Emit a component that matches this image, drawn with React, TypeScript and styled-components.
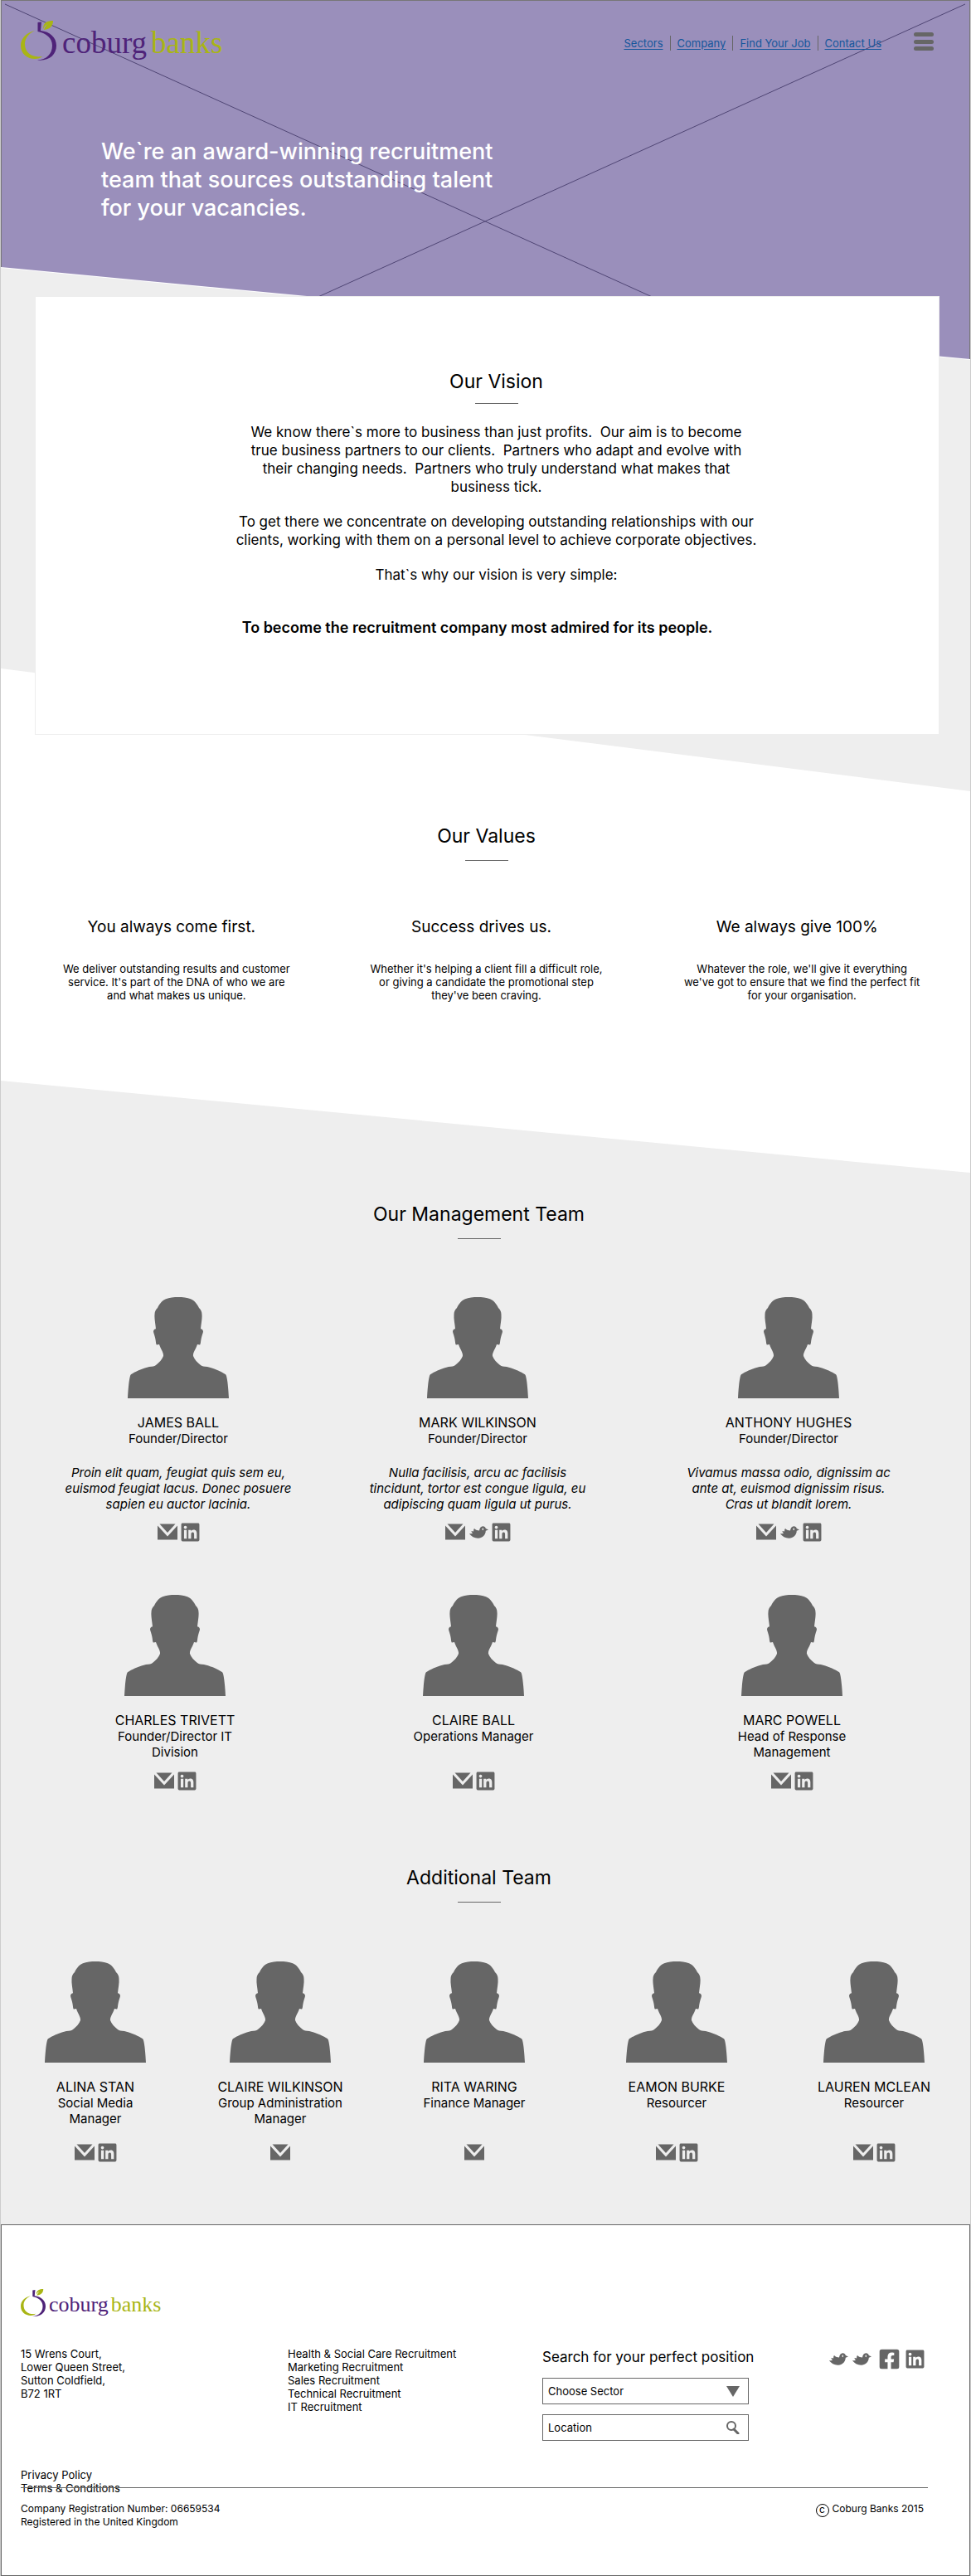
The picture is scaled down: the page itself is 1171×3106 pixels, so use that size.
import React from "react";
import styled, { createGlobalStyle } from "styled-components";
import { FaFacebookSquare, FaLinkedin } from "react-icons/fa";

const ink = "#000";
const grey = "#666";
const pale = "#eee";
const purple = "#4f2379";
const lime = "#a9b515";

const GlobalStyle = createGlobalStyle`
  *, *::before, *::after { box-sizing: border-box; }
  body {
    margin: 0;
    background: #fff;
    color: ${ink};
    font-family: Inter, "Open Sans", sans-serif;
  }
  h1, h2, h3, p, ul, address { margin: 0; padding: 0; font-weight: 400; font-style: normal; }
  ul { list-style: none; }
  a { color: inherit; text-decoration: none; }
`;

const Page = styled.div`
  border-left: 1px solid #ccc;
  border-right: 1px solid #ccc;
`;

/* ---------- shared pieces ---------- */

const Title = styled.h2`
  font-size: 23px;
  line-height: 30px;
  text-align: center;
`;

const Rule = styled.div<{ $gap: number }>`
  width: 52px;
  height: 1px;
  margin: ${(p) => p.$gap}px auto 0;
  background: ${grey};
`;

const LogoRow = styled.a<{ $small?: boolean }>`
  display: flex;
  align-items: flex-start;
  font-family: "Liberation Serif", serif;
  font-size: ${(p) => (p.$small ? 26 : 37)}px;
  line-height: ${(p) => (p.$small ? 38 : 54)}px;
  height: ${(p) => (p.$small ? 34 : 49)}px;
  color: ${purple};

  svg {
    flex: none;
    width: ${(p) => (p.$small ? 30 : 43)}px;
    height: 100%;
    margin-right: ${(p) => (p.$small ? 4 : 7)}px;
  }
`;

const LogoTail = styled.span<{ $small?: boolean }>`
  margin-left: ${(p) => (p.$small ? 3 : 5)}px;
  color: ${lime};
`;

function Logo({ small }: { small?: boolean }) {
  return (
    <LogoRow href="#" $small={small}>
      <svg viewBox="0 0 43 49" preserveAspectRatio="none" aria-hidden="true">
        <path d="M17 12 C7 14 0 21 0 30 C0 40 8 46 17 46 C21 46 24 45 26 43 C14 45 5 39 5 28 C5 21 10 15 17 12Z" fill={lime} />
        <path d="M20.500 2 L25 1.500 L24 12 C35 13 43 20 43 30 C43 41 34 49 20 47.500 C31 47 38 40 38 30 C38 21 31 15 20.500 13Z" fill={purple} />
        <path d="M27 8 C28 2 32 0 39 0 C39 6 36 10 28 11 C29 8 31 5 33 4 C30 5 28 7 27 10Z" fill={lime} />
      </svg>
      <span>coburg</span>
      <LogoTail $small={small}>banks</LogoTail>
    </LogoRow>
  );
}

const Icon = styled.svg`
  display: block;
  fill: ${grey};
`;

const MailIcon = () => (
  <Icon width="24" height="20" viewBox="0 0 24 20" aria-hidden="true">
    <path d="M2.500 .5h19L12 11z" />
    <path d="M0 2.500L12 15.500 24 2.500V19.500H0z" />
  </Icon>
);

const BirdIcon = () => (
  <Icon width="23" height="15" viewBox="0 0 23 15" aria-hidden="true">
    <path d="M0 9C1.800 9.400 3.200 9.300 4.300 8.800 3 8 2.500 7 2.500 6 3.500 6.400 4.500 6.500 5.300 6.300 5 5 5.200 4 6 3 8 4.800 9.800 5.400 12 5.600 12.300 2.500 14 .3 16.300 .3 18.100 .3 19.300 1.300 19.800 3L23 4.500 19.800 5.700C19.500 11 15.500 14.700 10.500 14.700 6.500 14.700 2 12.500 0 9Z" />
    <ellipse cx="16.300" cy="3.800" rx=".8" ry="1.400" fill={pale} />
  </Icon>
);

const IconLink = styled.a`
  display: flex;
  align-items: center;
  color: ${grey};
`;

const SquareMark = styled.span<{ $wide?: boolean }>`
  display: flex;
  justify-content: center;
  width: ${(p) => (p.$wide ? 24 : 22)}px;

  svg { flex: none; }
`;

type Channel = "Email" | "Twitter" | "Facebook" | "LinkedIn";

function Contact({ channel }: { channel: Channel }) {
  return (
    <IconLink href="#" aria-label={channel}>
      {channel === "Email" && <MailIcon />}
      {channel === "Twitter" && <BirdIcon />}
      {channel === "Facebook" && <SquareMark $wide><FaFacebookSquare size={27} /></SquareMark>}
      {channel === "LinkedIn" && <SquareMark><FaLinkedin size={25} /></SquareMark>}
    </IconLink>
  );
}

/* ---------- intro: header, tagline, vision ---------- */

const Intro = styled.div`
  position: relative;
  padding-bottom: 68px;
  background: ${pale};
`;

const Backdrop = styled.div`
  position: absolute;
  inset: 0 0 auto;
  height: 434px;
  background: #fff;
  clip-path: polygon(0 0, 100% 0, 100% 100%, 0 323px);
`;

const BackdropFill = styled.div`
  height: 433px;
  border: 1px solid #777;
  border-bottom: 0;
  background: #9a8fbb;
  clip-path: polygon(0 0, 100% 0, 100% 100%, 0 322px);

  svg { display: block; width: 100%; height: 100%; }
`;

const Header = styled.header`
  position: relative;
  display: flex;
  justify-content: space-between;
  align-items: flex-start;
  padding: 25px 44px 0 24px;
`;

const HeaderRight = styled.div`
  display: flex;
  align-items: flex-start;
  gap: 39px;
  padding-top: 14px;
`;

const Nav = styled.nav`
  display: flex;
  padding-top: 4px;
`;

const NavLink = styled.a`
  padding: 0 8px;
  border-left: 1px solid ${grey};
  font-size: 13px;
  line-height: 18px;
  color: #14569c;
  text-decoration: underline;
  text-underline-offset: 2px;

  &:first-child { border-left: 0; }
  &:last-child { padding-right: 0; }
`;

const MenuButton = styled.button`
  display: flex;
  flex-direction: column;
  justify-content: space-between;
  width: 24px;
  height: 22px;
  padding: 0;
  border: 0;
  background: none;

  span { height: 5px; border-radius: 3px; background: ${grey}; }
`;

const Tagline = styled.h1`
  position: relative;
  margin: 92px 0 89px 121px;
  color: #fff;
  font-size: 27px;
  font-weight: 500;
  line-height: 34px;
`;

const Card = styled.section`
  position: relative;
  z-index: 1;
  margin: 0 37px 0 41px;
  padding: 87px 0 117px 22px;
  border: 1px solid ${pale};
  background: #fff;
`;

const Copy = styled.div`
  display: grid;
  gap: 20px;
  margin-top: 23px;
  font-size: 17px;
  line-height: 22px;
  text-align: center;
  white-space: pre-wrap;
`;

const Statement = styled.p`
  padding: 22px 46px 0 0;
  font-size: 18px;
  font-weight: 600;
`;

/* ---------- values ---------- */

const Values = styled.section`
  position: relative;
  margin-top: -148px;
  padding: 187px 8px 206px 24px;
  background: #fff;
  clip-path: polygon(0 0, 100% 148px, 100% 100%, 0 100%);
`;

const ValueGrid = styled.div`
  display: grid;
  grid-template-columns: 376fr 372fr 390fr;
  margin-top: 68px;
  text-align: center;
`;

const CentredHead = styled.div`
  padding-right: 14px;
`;

const ValueTitle = styled.h3`
  padding-right: 12px;
  font-size: 19px;
  line-height: 24px;
`;

const ValueText = styled.p`
  margin-top: 30px;
  font-size: 13px;
  line-height: 16px;
`;

/* ---------- people ---------- */

const Team = styled.section`
  position: relative;
  margin-top: -111px;
  padding: 146px 0 76px;
  background: ${pale};
  clip-path: polygon(0 0, 100% 111px, 100% 100%, 0 100%);
`;

const TeamHead = styled.div<{ $gap?: number }>`
  margin-top: ${(p) => p.$gap ?? 0}px;
  padding-right: 16px;
`;

const People = styled.ul<{ $columns: string; $gap: number; $inset: string }>`
  display: grid;
  grid-template-columns: ${(p) => p.$columns};
  margin-top: ${(p) => p.$gap}px;
  padding: ${(p) => p.$inset};
  text-align: center;
`;

const Person = styled.li`
  display: flex;
  flex-direction: column;
  align-items: center;
  font-size: 15px;
  line-height: 19px;
`;

const PersonName = styled.h3`
  margin-top: 20px;
  font-size: 16px;
`;

const Bio = styled.p`
  margin-top: 22px;
  font-style: italic;
`;

const Contacts = styled.div`
  display: flex;
  align-items: center;
  gap: 5px;
  height: 22px;
`;

const Spacer = styled.div<{ $size: number }>`
  flex: 1 0 ${(p) => p.$size}px;
`;

const Avatar = () => (
  <Icon width="122" height="122" viewBox="0 0 122 122" aria-hidden="true">
    <path d="M0 122 C.5 112 1.500 100 3 95 C3.500 93.500 4 93 6 92 C11 89 19 85.500 26 84 C30 83.500 32 83.500 34 82 C38 79 41.500 75 43 71 C43.500 67 40 63 38 57 L35 57.500 C34 57 34 53 33.300 50 C32.500 46 31.500 44 31 41.700 C31 39.500 32.500 38.500 34 38.300 C33.500 32 32 26 32.500 21 C32.500 18 33.500 15 36 13 C39 7 42 4 46 2.300 C50 .6 56 0 61 0 C66 0 72 .6 76 2.300 C80 4 83 7 86 13 C88.500 15 89.500 18 89.500 21 C90 26 88.500 32 88 38.300 C89.500 38.500 91 39.500 91 41.700 C90.500 44 89.500 46 88.700 50 C88 53 88 57 87 57.500 L84 57 C82 63 78.500 67 79 71 C80.500 75 84 79 88 82 C90 83.500 92 83.500 96 84 C103 85.500 111 89 116 92 C118 93 118.500 93.500 119 95 C120.500 100 121.500 112 122 122Z" />
  </Icon>
);

interface Member {
  name: string;
  role: string[];
  bio?: string[];
  contacts: Channel[];
}

const Lines = ({ of }: { of: string[] }) => (
  <>
    {of.map((line, i) => (
      <React.Fragment key={line}>
        {i > 0 && <br />}
        {line}
      </React.Fragment>
    ))}
  </>
);

function PersonCard({ member, space }: { member: Member; space: number }) {
  return (
    <Person>
      <Avatar />
      <PersonName>{member.name}</PersonName>
      <p><Lines of={member.role} /></p>
      {member.bio && <Bio><Lines of={member.bio} /></Bio>}
      <Spacer $size={space} />
      <Contacts>
        {member.contacts.map((c) => <Contact key={c} channel={c} />)}
      </Contacts>
    </Person>
  );
}

const founders: Member[] = [
  {
    name: "JAMES BALL",
    role: ["Founder/Director"],
    bio: ["Proin elit quam, feugiat quis sem eu,", "euismod feugiat lacus. Donec posuere", "sapien eu auctor lacinia."],
    contacts: ["Email", "LinkedIn"],
  },
  {
    name: "MARK WILKINSON",
    role: ["Founder/Director"],
    bio: ["Nulla facilisis, arcu ac facilisis", "tincidunt, tortor est congue ligula, eu", "adipiscing quam ligula ut purus."],
    contacts: ["Email", "Twitter", "LinkedIn"],
  },
  {
    name: "ANTHONY HUGHES",
    role: ["Founder/Director"],
    bio: ["Vivamus massa odio, dignissim ac", "ante at, euismod dignissim risus.", "Cras ut blandit lorem."],
    contacts: ["Email", "Twitter", "LinkedIn"],
  },
];

const managers: Member[] = [
  { name: "CHARLES TRIVETT", role: ["Founder/Director IT", "Division"], contacts: ["Email", "LinkedIn"] },
  { name: "CLAIRE BALL", role: ["Operations Manager"], contacts: ["Email", "LinkedIn"] },
  { name: "MARC POWELL", role: ["Head of Response", "Management"], contacts: ["Email", "LinkedIn"] },
];

const additional: Member[] = [
  { name: "ALINA STAN", role: ["Social Media", "Manager"], contacts: ["Email", "LinkedIn"] },
  { name: "CLAIRE WILKINSON", role: ["Group Administration", "Manager"], contacts: ["Email"] },
  { name: "RITA WARING", role: ["Finance Manager"], contacts: ["Email"] },
  { name: "EAMON BURKE", role: ["Resourcer"], contacts: ["Email", "LinkedIn"] },
  { name: "LAUREN MCLEAN", role: ["Resourcer"], contacts: ["Email", "LinkedIn"] },
];

const values = [
  {
    title: "You always come first.",
    text: ["We deliver outstanding results and customer", "service. It's part of the DNA of who we are", "and what makes us unique."],
  },
  {
    title: "Success drives us.",
    text: ["Whether it's helping a client fill a difficult role,", "or giving a candidate the promotional step", "they've been craving."],
  },
  {
    title: "We always give 100%",
    text: ["Whatever the role, we'll give it everything", "we've got to ensure that we find the perfect fit", "for your organisation."],
  },
];

/* ---------- footer ---------- */

const Footer = styled.footer`
  position: relative;
  padding: 77px 50px 56px 23px;
  border: 1px solid ${grey};
  background: #fff;
  font-size: 13px;
  line-height: 16px;
`;

const FooterGrid = styled.div`
  display: grid;
  grid-template-columns: 322fr 307fr 346fr 119fr;
  align-items: start;
  margin-top: 36px;
`;

const SearchForm = styled.form`
  display: grid;
  grid-template-columns: minmax(0, 1fr);
  gap: 12px;
  width: 249px;
  padding-top: 2px;
`;

const SearchTitle = styled.h3`
  margin-bottom: 3px;
  font-size: 17px;
  line-height: 20px;
  white-space: nowrap;
`;

const Field = styled.label`
  position: relative;
  display: flex;
  align-items: center;
  height: 32px;
  border: 1px solid ${grey};

  select, input {
    flex: 1;
    min-width: 0;
    height: 100%;
    padding: 0 32px 0 6px;
    border: 0;
    background: none;
    appearance: none;
    color: ${ink};
    font: inherit;
  }

  input::placeholder { color: ${ink}; opacity: 1; }

  svg {
    position: absolute;
    right: 10px;
    pointer-events: none;
  }
`;

const Social = styled.div`
  display: flex;
  align-items: center;
  gap: 5px;
  height: 24px;
  margin-top: 2px;
`;

const SocialSquares = styled.div`
  display: flex;
  align-items: center;
  gap: 8px;
  margin-left: 4px;
`;

const Legal = styled.div`
  position: relative;
  display: flex;
  flex-direction: column;
  align-items: flex-start;
  margin-top: 33px;

  &::after {
    content: "";
    position: absolute;
    left: 0;
    right: 0;
    top: 23px;
    height: 1px;
    background: ${grey};
  }
`;

const Closing = styled.div`
  display: flex;
  justify-content: space-between;
  align-items: flex-start;
  margin-top: 9px;
  font-size: 12px;
`;

const Copyright = styled.p`
  display: flex;
  align-items: flex-start;
  gap: 4px;
  padding-right: 5px;
`;

const CircledC = styled.span`
  width: 16px;
  height: 16px;
  margin-top: 2px;
  border: 1px solid ${ink};
  border-radius: 50%;
  text-align: center;
  line-height: 12px;
`;

export default function App() {
  return (
    <>
      <GlobalStyle />
      <Page>
        <Intro>
          <Backdrop>
            <BackdropFill>
              <svg viewBox="0 0 1169 433" preserveAspectRatio="none" aria-hidden="true">
                <path d="M4 4L1164 529M1164 4L4 529" fill="none" stroke="#4f4574" vectorEffect="non-scaling-stroke" />
              </svg>
            </BackdropFill>
          </Backdrop>
          <Header>
            <Logo />
            <HeaderRight>
              <Nav>
                <NavLink href="#">Sectors</NavLink>
                <NavLink href="#">Company</NavLink>
                <NavLink href="#">Find Your Job</NavLink>
                <NavLink href="#">Contact Us</NavLink>
              </Nav>
              <MenuButton type="button" aria-label="Menu"><span /><span /><span /></MenuButton>
            </HeaderRight>
          </Header>
          <Tagline>
            <Lines of={["We`re an award-winning recruitment", "team that sources outstanding talent", "for your vacancies."]} />
          </Tagline>
          <Card>
            <Title>Our Vision</Title>
            <Rule $gap={11} />
            <Copy>
              <p>
                <Lines
                  of={[
                    "We know there`s more to business than just profits.  Our aim is to become",
                    "true business partners to our clients.  Partners who adapt and evolve with",
                    "their changing needs.  Partners who truly understand what makes that",
                    "business tick.",
                  ]}
                />
              </p>
              <p>
                <Lines
                  of={[
                    "To get there we concentrate on developing outstanding relationships with our",
                    "clients, working with them on a personal level to achieve corporate objectives.",
                  ]}
                />
              </p>
              <p>That`s why our vision is very simple:</p>
              <Statement>To become the recruitment company most admired for its people.</Statement>
            </Copy>
          </Card>
        </Intro>

        <Values>
          <CentredHead>
            <Title>Our Values</Title>
            <Rule $gap={14} />
          </CentredHead>
          <ValueGrid>
            {values.map((v) => (
              <div key={v.title}>
                <ValueTitle>{v.title}</ValueTitle>
                <ValueText><Lines of={v.text} /></ValueText>
              </div>
            ))}
          </ValueGrid>
        </Values>

        <Team>
          <TeamHead>
            <Title>Our Management Team</Title>
            <Rule $gap={14} />
          </TeamHead>
          <People $columns="380fr 342fr 408fr" $gap={70} $inset="0 15px 0 24px">
            {founders.map((m) => <PersonCard key={m.name} member={m} space={13} />)}
          </People>
          <People $columns="360fr 360fr 408fr" $gap={65} $inset="0 11px 0 30px">
            {managers.map((m) => <PersonCard key={m.name} member={m} space={14} />)}
          </People>
          <TeamHead $gap={91}>
            <Title>Additional Team</Title>
            <Rule $gap={14} />
          </TeamHead>
          <People $columns="222fr 224fr 244fr 244fr 232fr" $gap={71} $inset="0 0 0 3px">
            {additional.map((m) => <PersonCard key={m.name} member={m} space={20} />)}
          </People>
        </Team>

        <Footer>
          <Logo small />
          <FooterGrid>
            <address>
              <Lines of={["15 Wrens Court,", "Lower Queen Street,", "Sutton Coldfield,", "B72 1RT"]} />
            </address>
            <ul>
              <li><a href="#">Health &amp; Social Care Recruitment</a></li>
              <li><a href="#">Marketing Recruitment</a></li>
              <li><a href="#">Sales Recruitment</a></li>
              <li><a href="#">Technical Recruitment</a></li>
              <li><a href="#">IT Recruitment</a></li>
            </ul>
            <SearchForm>
              <SearchTitle>Search for your perfect position</SearchTitle>
              <Field>
                <select aria-label="Choose Sector" defaultValue="">
                  <option value="">Choose Sector</option>
                </select>
                <Icon width="16" height="13" viewBox="0 0 16 13" aria-hidden="true"><path d="M0 0h16L8 13z" /></Icon>
              </Field>
              <Field>
                <input type="text" aria-label="Location" placeholder="Location" />
                <Icon width="16" height="16" viewBox="0 0 16 16" aria-hidden="true">
                  <circle cx="6" cy="6" r="5" fill="none" stroke={grey} strokeWidth="2" />
                  <path d="M9 10L14 15" stroke={grey} strokeWidth="3" strokeLinecap="round" />
                </Icon>
              </Field>
            </SearchForm>
            <Social>
              <Contact channel="Twitter" />
              <Contact channel="Twitter" />
              <SocialSquares>
                <Contact channel="Facebook" />
                <Contact channel="LinkedIn" />
              </SocialSquares>
            </Social>
          </FooterGrid>
          <Legal>
            <a href="#">Privacy Policy</a>
            <a href="#">Terms &amp; Conditions</a>
          </Legal>
          <Closing>
            <p>
              <Lines of={["Company Registration Number: 06659534", "Registered in the United Kingdom"]} />
            </p>
            <Copyright><CircledC>c</CircledC>Coburg Banks 2015</Copyright>
          </Closing>
        </Footer>
      </Page>
    </>
  );
}
